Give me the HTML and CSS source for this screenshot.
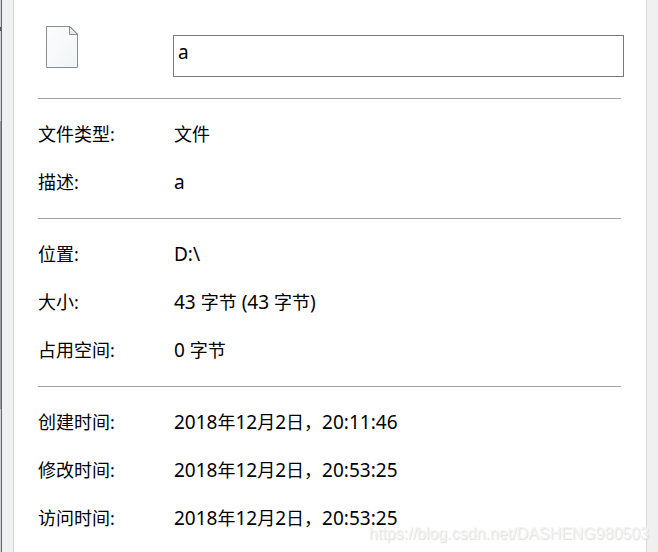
FILE: index.html
```html
<!DOCTYPE html>
<html lang="zh-CN">
<head>
    <meta charset="UTF-8">
    <meta name="viewport" content="width=device-width, initial-scale=1.0">
    <title>a 属性</title>
    <link rel="stylesheet" href="styles.css">
</head>
<body>
    <div class="edge"></div>
    <div class="dialog">
        <div class="panel">
            <div class="header">
                <svg class="file-icon" width="32" height="42" viewBox="0 0 32 42">
                    <defs>
                        <linearGradient id="paper" x1="0" y1="0" x2="1" y2="1">
                            <stop offset="0" stop-color="#fcfdfd"/>
                            <stop offset="1" stop-color="#f1f4f6"/>
                        </linearGradient>
                    </defs>
                    <path d="M0.5 0.5H24L31.5 8V41.5H0.5Z" fill="url(#paper)" stroke="#8b8c8c"/>
                    <path d="M23.5 0.5V8.5H31.5Z" fill="#e9ebec" stroke="#8b8c8c"/>
                </svg>
                <input type="text" class="file-name" value="a">
            </div>

            <div class="group">
                <div class="row">
                    <div class="label">文件类型:</div>
                    <div class="value"><span class="zh">文件</span></div>
                </div>
                <div class="row">
                    <div class="label">描述:</div>
                    <div class="value">a</div>
                </div>
            </div>

            <div class="group">
                <div class="row">
                    <div class="label">位置:</div>
                    <div class="value">D:\</div>
                </div>
                <div class="row">
                    <div class="label">大小:</div>
                    <div class="value">43 <span class="zh">字节</span> (43 <span class="zh">字节</span>)</div>
                </div>
                <div class="row">
                    <div class="label">占用空间:</div>
                    <div class="value">0 <span class="zh">字节</span></div>
                </div>
            </div>

            <div class="group">
                <div class="row">
                    <div class="label">创建时间:</div>
                    <div class="value">2018<span class="zh">年</span>12<span class="zh">月</span>2<span class="zh">日，</span>20:11:46</div>
                </div>
                <div class="row">
                    <div class="label">修改时间:</div>
                    <div class="value">2018<span class="zh">年</span>12<span class="zh">月</span>2<span class="zh">日，</span>20:53:25</div>
                </div>
                <div class="row">
                    <div class="label">访问时间:</div>
                    <div class="value">2018<span class="zh">年</span>12<span class="zh">月</span>2<span class="zh">日，</span>20:53:25</div>
                </div>
            </div>
        </div>
    </div>
    <div class="watermark">https://blog.csdn.net/DASHENG980503</div>
</body>
</html>
```

FILE: styles.css
```css
* {
    margin: 0;
    padding: 0;
    box-sizing: border-box;
}

body {
    position: relative;
    display: flex;
    height: 552px;
    overflow: hidden;
    background: #f0f0f0;
    color: #000;
    font-family: 'Noto Sans', 'Noto Sans CJK SC', sans-serif;
    font-size: 19px;
}

/* 后面窗口露出的一条边 */
.edge {
    width: 1px;
    flex-shrink: 0;
    background: linear-gradient(#d0d0d0 0 27px, #555 27px 31px, #d0d0d0 31px 121px, #999 121px 409px, #d0d0d0 409px);
}

.dialog {
    flex: 1;
    min-width: 0;
    display: flex;
    padding: 0 11px;
    border-left: 1px solid #1979ca;
}

.panel {
    flex: 1;
    min-width: 0;
    padding: 0 25px 0 24px;
    background: #fff;
    border: solid #d9d9d9;
    border-width: 0 1px;
}

.header {
    display: flex;
    height: 98px;
    padding-left: 8px;
}

.file-icon {
    flex-shrink: 0;
    margin: 26px 95px 0 0;
}

.file-name {
    width: 451px;
    flex-shrink: 0;
    height: 42px;
    margin-top: 35px;
    padding: 0 4px 9px;
    border: 1px solid #7a7a7a;
    outline: none;
    font: inherit;
}

.group {
    padding: 11px 0 12px;
    border-top: 1px solid #a0a0a0;
}

.row {
    display: flex;
    height: 48px;
    line-height: 48px;
    white-space: nowrap;
}

.label {
    width: 136px;
    font-size: 18px;
}

.zh {
    font-size: 18px;
}

.watermark {
    position: absolute;
    right: 9px;
    bottom: 8px;
    color: #f4f4f4;
    font-family: 'Liberation Sans', Arial, sans-serif;
    font-size: 16px;
    line-height: 20px;
    text-shadow: 1px 1px 1px #ddd;
}
```
